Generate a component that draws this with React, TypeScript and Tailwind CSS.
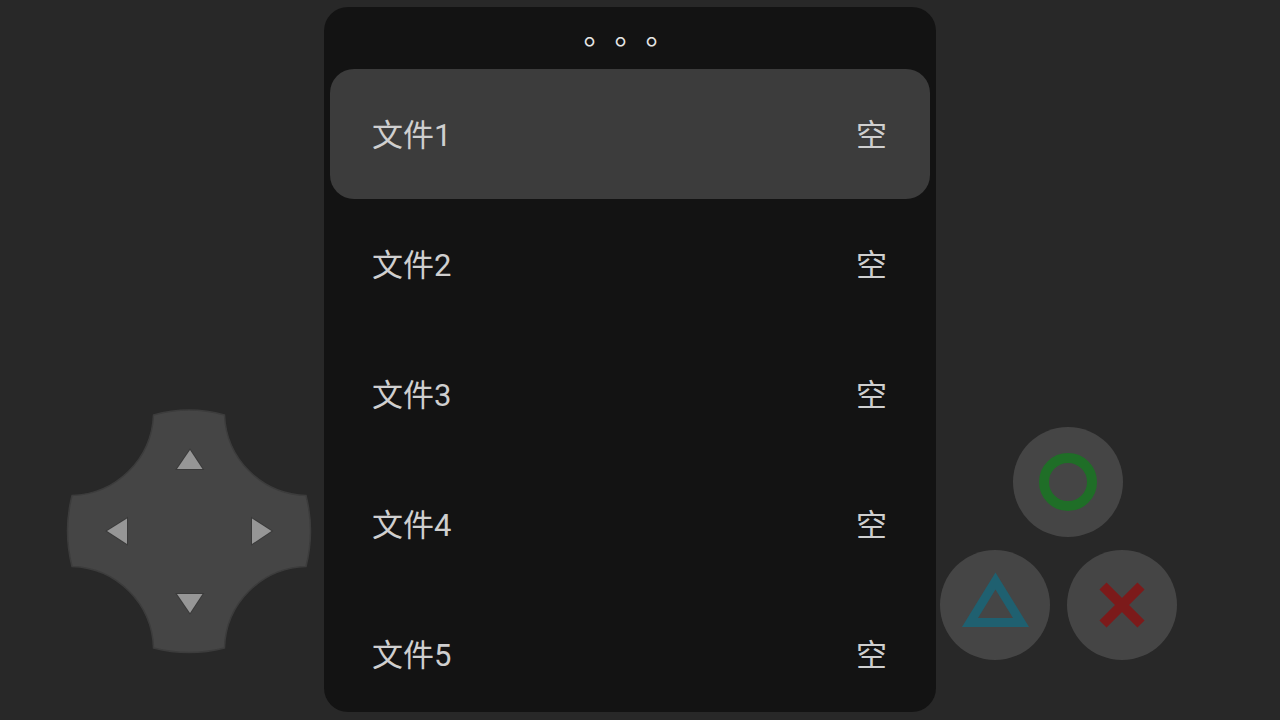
import type { ReactNode } from 'react';

const files = [1, 2, 3, 4, 5].map((n) => ({ name: `文件${n}`, status: '空' }));

const arrowCells = [
  { label: '上', cell: 'col-start-2 row-start-1', points: '14,1 26.500,20 1,20', box: '0 0 27 20', size: 'w-[27px] h-5' },
  { label: '左', cell: 'col-start-1 row-start-2', points: '0,13 20,0.500 20,26', box: '0 0 20 27', size: 'w-5 h-[27px]' },
  { label: '右', cell: 'col-start-3 row-start-2', points: '20.500,13 1,0.500 1,26', box: '0 0 20 27', size: 'w-5 h-[27px]' },
  { label: '下', cell: 'col-start-2 row-start-3', points: '1,1 26.500,1 14,20', box: '0 0 27 20', size: 'w-[27px] h-5' },
];

function DPad() {
  return (
    <div className="relative h-[246px] w-[246px]">
      <svg className="absolute inset-0" viewBox="0 0 246 246" aria-hidden="true">
        <path
          d="M87.5 7 Q123 -3 158.500 7 A84 84 0 0 0 240 87.500 Q249 123 240 158.500 A84 84 0 0 0 158.500 240 Q123 249 87.500 240 A84 84 0 0 0 6 158.500 Q-3 123 6 87.500 A84 84 0 0 0 87.500 7 Z"
          fill="#454545"
          stroke="#3c3c3c"
          strokeWidth="1.5"
        />
      </svg>
      <div className="relative grid h-full grid-cols-3 grid-rows-3 p-[15px]">
        {arrowCells.map((a) => (
          <button key={a.label} type="button" aria-label={a.label} className={`flex items-center justify-center ${a.cell}`}>
            <svg className={`overflow-visible ${a.size}`} viewBox={a.box}>
              <polygon points={a.points} fill="#969696" stroke="#3a3a3a" strokeWidth="2" paintOrder="stroke" />
            </svg>
          </button>
        ))}
      </div>
    </div>
  );
}

function RoundButton({ label, children }: { label: string; children: ReactNode }) {
  return (
    <button type="button" aria-label={label} className="h-[110px] w-[110px] rounded-full bg-[#454545]">
      <svg viewBox="0 0 110 110" fill="none">
        {children}
      </svg>
    </button>
  );
}

export default function App() {
  return (
    <main className="grid h-screen grid-cols-[1fr_612px_1fr] overflow-hidden bg-[#282828] pt-[7px] pr-5 pb-2 font-[Roboto,'Noto_Sans_CJK_SC',sans-serif] text-[31px] text-[#cfcfcf]">
      <div className="flex items-end justify-end pr-3 pb-[58px]">
        <DPad />
      </div>

      <section className="flex min-h-0 flex-col overflow-hidden rounded-3xl bg-[#131313]">
        <header className="flex h-[62px] shrink-0 items-center justify-center pb-2 text-[#e6e6e6] [text-spacing-trim:space-all]">
          。。。
        </header>
        <ul className="min-h-0 flex-1 overflow-hidden px-1.5">
          {files.map((file, i) => (
            <li key={file.name}>
              <button
                type="button"
                className={`flex h-[130px] w-full items-center justify-between rounded-3xl pt-1 pr-[43px] pl-[42px] ${i === 0 ? 'bg-[#3c3c3c]' : ''}`}
              >
                <span>{file.name}</span>
                <span>{file.status}</span>
              </button>
            </li>
          ))}
        </ul>
      </section>

      <div className="flex flex-col justify-end pb-[52px] pl-1">
        <div className="flex w-[237px] flex-col items-center gap-[13px]">
          <div className="flex pl-[18px]">
            <RoundButton label="圆圈">
              <circle cx="55" cy="55" r="24" stroke="#1f6e27" strokeWidth="10" />
            </RoundButton>
          </div>
          <div className="flex w-full justify-between">
            <RoundButton label="三角">
              <path d="M55.500 31 L81 72.500 H30 Z" stroke="#1f6070" strokeWidth="9" />
            </RoundButton>
            <RoundButton label="叉">
              <path d="M36 36 L74 74 M74 36 L36 74" stroke="#7c1a1a" strokeWidth="10" />
            </RoundButton>
          </div>
        </div>
      </div>
    </main>
  );
}
